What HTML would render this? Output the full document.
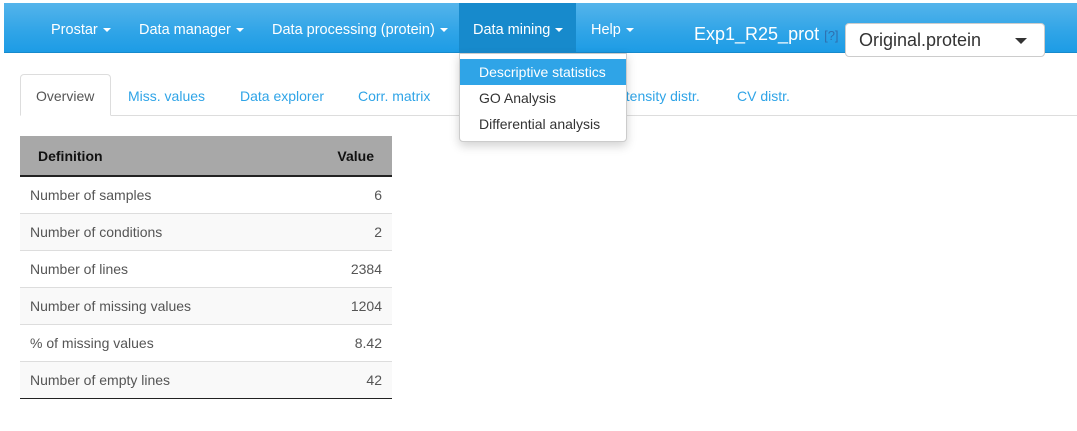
<!DOCTYPE html>
<html><head><style>
*{box-sizing:border-box;margin:0;padding:0}
body{width:1077px;height:431px;background:#fff;font-family:"Liberation Sans",Arial,sans-serif;font-size:14px;color:#555;position:relative;overflow:hidden}
.nav{position:absolute;left:4px;top:3px;width:1073px;height:50px;background:linear-gradient(#54b4eb,#2fa4e7 60%,#1d9ce5);border-bottom:1px solid #178acc}
.nav a{position:absolute;top:0;height:50px;line-height:54px;color:#fff;font-size:14.5px;white-space:nowrap}
.caret{display:inline-block;width:0;height:0;border-left:4px solid transparent;border-right:4px solid transparent;border-top:4px solid #fff;vertical-align:middle;margin-left:5px}
.act{background:#178acc}
.title{position:absolute;left:694px;top:24px;color:#fff;font-size:18px}
.q{color:#2f6fae;font-size:13px}
.sel{position:absolute;left:845px;top:23px;width:200px;height:34px;background:#fff;border:1px solid #ccc;border-radius:4px;font-size:18px;color:#333;padding:6px 13px}
.sel .c{position:absolute;right:17px;top:14px;border-left:6px solid transparent;border-right:6px solid transparent;border-top:6px solid #333}
.dd{position:absolute;left:459px;top:53px;width:168px;height:89px;background:#fff;border:1px solid #ccc;border-radius:0 0 4px 4px;box-shadow:0 4px 10px rgba(0,0,0,.18)}
.dd div{height:26px;line-height:26px;padding-left:19px;color:#333;font-size:14px}
.dd .h{background:#2fa4e7;color:#fff;margin-top:5px}
.tabs{position:absolute;left:20px;top:115px;width:1057px;border-top:1px solid #ddd}
.tab{position:absolute;top:82px;color:#2fa4e7;font-size:14px}
.tab0{position:absolute;left:20px;top:74px;width:91px;height:42px;border:1px solid #ddd;border-bottom:1px solid #fff;border-radius:4px 4px 0 0;background:#fff;color:#555;padding:13px 15px;z-index:2}
table{position:absolute;left:20px;top:136px;width:372px;border-collapse:collapse;font-size:14px}
th{background:#a8a8a8;color:#111;height:40px;border-bottom:2px solid #222;font-weight:bold;text-align:left;padding:0 18px}
th.r{text-align:right}
td{height:37px;border-top:1px solid #ddd;padding:0 10px;color:#555}
td.r{text-align:right}
tr:nth-child(odd) td{background:#f9f9f9}
tr:last-child td{border-bottom:1px solid #222}
</style></head><body>
<div class="nav">
<a style="left:47px">Prostar<span class="caret"></span></a>
<a style="left:135px">Data manager<span class="caret"></span></a>
<a style="left:268px">Data processing (protein)<span class="caret"></span></a>
<a class="act" style="left:455px;width:117px;padding-left:14px">Data mining<span class="caret"></span></a>
<a style="left:587px">Help<span class="caret"></span></a>
</div>
<div class="title">Exp1_R25_prot <span class="q">[?]</span></div>
<div class="sel">Original.protein<span class="c"></span></div>
<div class="tabs"></div>
<div class="tab0">Overview</div>
<div class="tab" style="left:128px;top:88px">Miss. values</div>
<div class="tab" style="left:240px;top:88px">Data explorer</div>
<div class="tab" style="left:358px;top:88px">Corr. matrix</div>
<div class="tab" style="left:618px;top:88px">ntensity distr.</div>
<div class="tab" style="left:737px;top:88px">CV distr.</div>
<div class="dd"><div class="h">Descriptive statistics</div><div>GO Analysis</div><div>Differential analysis</div></div>
<table>
<tr><th>Definition</th><th class="r">Value</th></tr>
<tr><td>Number of samples</td><td class="r">6</td></tr>
<tr><td>Number of conditions</td><td class="r">2</td></tr>
<tr><td>Number of lines</td><td class="r">2384</td></tr>
<tr><td>Number of missing values</td><td class="r">1204</td></tr>
<tr><td>% of missing values</td><td class="r">8.42</td></tr>
<tr><td>Number of empty lines</td><td class="r">42</td></tr>
</table>
</body></html>
